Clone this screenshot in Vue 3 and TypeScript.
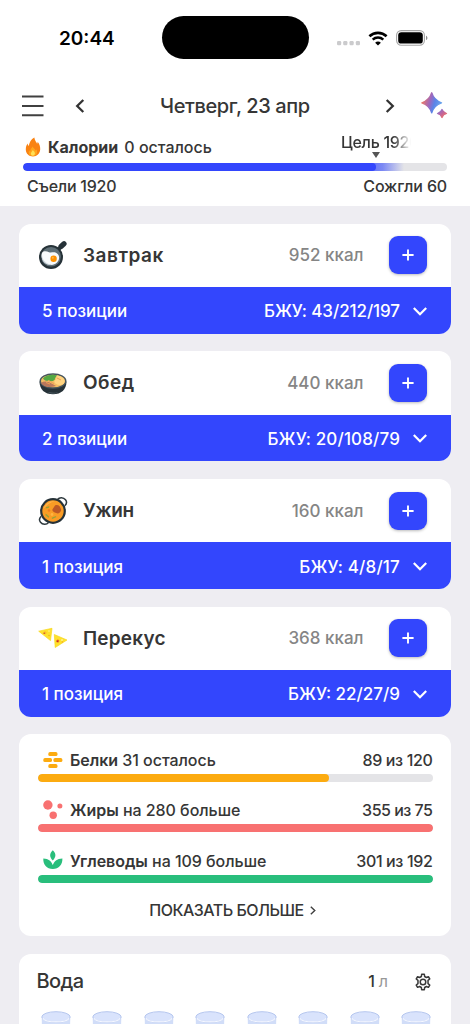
<script setup lang="ts">
interface Meal {
  id: string
  name: string
  kcal: number
  items: string
  macros: string
}
interface Nutrient {
  id: string
  name: string
  status: string
  total: string
  percent: number
}

const meals: Meal[] = [
  { id: 'breakfast', name: 'Завтрак', kcal: 952, items: '5 позиции', macros: '43/212/197' },
  { id: 'lunch', name: 'Обед', kcal: 440, items: '2 позиции', macros: '20/108/79' },
  { id: 'dinner', name: 'Ужин', kcal: 160, items: '1 позиция', macros: '4/8/17' },
  { id: 'snack', name: 'Перекус', kcal: 368, items: '1 позиция', macros: '22/27/9' },
]
const nutrients: Nutrient[] = [
  { id: 'protein', name: 'Белки', status: '31 осталось', total: '89 из 120', percent: 73.7 },
  { id: 'fat', name: 'Жиры', status: 'на 280 больше', total: '355 из 75', percent: 100 },
  { id: 'carbs', name: 'Углеводы', status: 'на 109 больше', total: '301 из 192', percent: 100 },
]
const cups = 8
</script>

<template>
  <div class="screen">
    <header class="top">
      <div class="status">
        <span class="time">20:44</span>
        <span class="island"></span>
        <div class="signals">
          <svg class="cell" width="24" height="6" viewBox="0 0 24 6" fill="#cbcbcd">
            <rect x="0" y="1" width="4.2" height="4.2" rx="1.2" /><rect x="6.2" y="1" width="4.2" height="4.2" rx="1.2" />
            <rect x="12.5" y="1" width="4.2" height="4.2" rx="1.2" /><rect x="18.8" y="1" width="4.2" height="4.2" rx="1.2" />
          </svg>
          <svg class="wifi" width="20" height="15" viewBox="0 0 20 15" fill="none" stroke="#000">
            <path d="M1.4 5.3C6.2.7 13.8.7 18.6 5.3" stroke-width="2.6" />
            <path d="M4.7 8.7c3-2.8 7.6-2.8 10.6 0" stroke-width="2.5" />
            <path d="M10 14.6l-2.9-2.9c1.6-1.5 4.2-1.5 5.8 0z" fill="#000" stroke="none" />
          </svg>
          <svg class="battery" width="32" height="16" viewBox="0 0 32 16">
            <rect x=".6" y=".6" width="27.8" height="14.6" rx="4.6" fill="none" stroke="#a5a5a5" stroke-width="1.1" />
            <rect x="2.2" y="2.2" width="24.6" height="11.4" rx="3.2" fill="#000" />
            <path d="M30 5.7c1.9.7 1.9 3.7 0 4.4z" fill="#8f8f8f" />
          </svg>
        </div>
      </div>

      <nav class="nav">
        <svg class="menu" width="22" height="22" viewBox="0 0 22 22" stroke="#404040" stroke-width="2.1">
          <path d="M0 1.5h21.5M0 11h21.5M0 20.3h21.5" />
        </svg>
        <svg class="prev" width="10" height="14" viewBox="0 0 10 14" fill="none" stroke="#333" stroke-width="2.3">
          <path d="M8.3 1 2.2 7l6.1 6" />
        </svg>
        <span class="date">Четверг, 23 апр</span>
        <svg class="next" width="10" height="14" viewBox="0 0 10 14" fill="none" stroke="#333" stroke-width="2.3">
          <path d="M1.7 1 7.8 7l-6.1 6" />
        </svg>
        <svg class="spark" width="27" height="27" viewBox="0 0 27 27">
          <defs>
            <linearGradient id="spark-a" x1="0" y1="0.3" x2="1" y2="0.6">
              <stop offset="0" stop-color="#f5785c" /><stop offset=".42" stop-color="#9a68c0" />
              <stop offset=".65" stop-color="#5a84e8" /><stop offset="1" stop-color="#6ca6ec" />
            </linearGradient>
            <linearGradient id="spark-b" x1="0" y1="0" x2="1" y2="1">
              <stop offset="0" stop-color="#7377e5" /><stop offset=".5" stop-color="#c2659a" /><stop offset="1" stop-color="#ff7858" />
            </linearGradient>
          </defs>
          <path d="M10.7.8Q12.9 8.3 20.5 10.800Q12.900 13.300 10.700 20.800Q8.500 13.300.9 10.800Q8.500 8.300 10.700.8z" fill="url(#spark-a)" stroke="url(#spark-a)" stroke-width="1.400" stroke-linejoin="round" />
          <path d="M21 17.500Q22 20.500 25.500 21.500Q22 22.500 21 25.500Q20 22.500 16.500 21.500Q20 20.500 21 17.500z" fill="url(#spark-b)" stroke="url(#spark-b)" stroke-width="1.300" stroke-linejoin="round" />
        </svg>
      </nav>

      <section class="calories">
        <div class="cal-head">
          <svg class="flame" width="16" height="20" viewBox="0 0 16 20">
            <path d="M9.300.5c.4 3.200 2.200 4.600 2.800 6.300.5-.6.6-1.200.5-2C14.600 7 15.400 9.700 15.200 12.500 14.900 16.700 12 19.400 8 19.400S1 16.700.8 12.700C.7 10 1.600 8 2.600 6.600c.2 1.200.5 2 1.100 2.500C4.400 5.400 6 2.400 9.300.5z" fill="#f98212" />
            <path d="M7.800 9.500c.4 2 2.300 2.300 2.900 4 .5-.3.7-.8.8-1.300 1.500 3.400.1 6.700-3.500 6.700-3.700 0-5.300-2.800-3.700-5.700.2.700.5 1.100 1 1.400C5.300 12.500 6.200 11 7.800 9.500z" fill="#ffa51c" />
            <path d="M7.800 13c1.200 1.400 2.300 2.200 2.100 3.800-.1 1.100-.9 1.900-2 1.900-1.200 0-2-.9-2-2 0-1.400 1.200-2.200 1.900-3.700z" fill="#ffe056" />
          </svg>
          <b>Калории</b>
          <span class="left">0 осталось</span>
          <span class="goal">Цель 1920</span>
          <i class="pointer"></i>
        </div>
        <div class="cal-track"><i class="cal-burned"></i><i class="cal-eaten"></i></div>
        <div class="cal-foot"><span class="eaten">Съели 1920</span><span class="burned">Сожгли 60</span></div>
      </section>
    </header>

    <main class="content">
      <article v-for="meal in meals" :key="meal.id" class="card">
        <div class="meal-head">
          <svg v-if="meal.id === 'breakfast'" class="meal-icon" width="30" height="30" viewBox="0 0 30 30">
            <path d="M20.500 9.500 24 5.700" stroke="#263238" stroke-width="3.500" />
            <path d="M23 6.500 26 3.800" stroke="#263238" stroke-width="5.200" stroke-linecap="round" />
            <circle cx="13" cy="17" r="12" fill="#263238" /><circle cx="13" cy="16.800" r="9.800" fill="#607078" />
            <path d="M4 13c2-2.500 4.500-1.600 7-.8 2.300.8 4.500-.7 7 .6 3.600 1.900 3.700 5.300 2.300 8-1.700 3.300-4.600 4.500-8 4-5.500-.5-10.200-6.800-8.300-11.800z" fill="#f8fbfd" />
            <path d="M4 14c0 6 3.600 9.300 9 10.500-5.500 1.400-10.500-4-9-10.500z" fill="#d3dbe1" />
            <circle cx="15.600" cy="18.700" r="3.200" fill="#ff9100" /><circle cx="14.800" cy="17.700" r="1" fill="#ffb64a" />
          </svg>
          <svg v-else-if="meal.id === 'lunch'" class="meal-icon" width="30" height="30" viewBox="0 0 30 30">
            <path d="M1.500 13.500c0 8 5.200 12.800 13.500 12.800S28.500 21.500 28.500 13.500z" fill="#263238" />
            <path d="M10 24c3 1 7.500 1.200 10 0-1.500 1.200-3 1.600-5 1.600s-3.500-.4-5-1.600z" fill="#53626a" />
            <ellipse cx="15" cy="13" rx="13.500" ry="7.800" fill="#47565e" />
            <ellipse cx="15" cy="13" rx="12" ry="6.300" fill="#f3bd63" />
            <path d="M3 14.800c4-2.400 8-1.200 12 1.500l3 1.800c-6 2.200-13.500.7-15-3.300z" fill="#b9785c" />
            <path d="M5 10.500C8 6.800 14 6 19 7.300l-2 3c.5 2.500-3.500 3.600-5.700 2.300-2.300.5-5 .3-6.300-2.100z" fill="#54a843" />
            <path d="M19 7.500c5 .4 9 4 7.200 7.500-1.500 2.200-5.800 2.800-8 1-2.500-1.300-2.200-4-.2-4.800z" fill="#ffd481" />
            <path d="M8 14.500 12 16M10 12.500l6 3M19 10l4 2" stroke="#ee9d53" stroke-width="1" />
          </svg>
          <svg v-else-if="meal.id === 'dinner'" class="meal-icon" width="30" height="30" viewBox="0 0 30 30">
            <path d="M19.500 3.500c2-2.700 6-2.300 8 .2 1.300 1.700 1.100 4.300-.7 6M10.500 26.500c-2 2.700-6 2.300-8-.2-1.300-1.700-1.100-4.300.7-6" fill="none" stroke="#303b40" stroke-width="1.500" />
            <circle cx="15" cy="15" r="12.900" fill="#263238" /><circle cx="15" cy="15" r="10.700" fill="#f99c25" />
            <path d="M5.500 13C7 7.500 12 4.500 17 5.300c-5 1-8.500 3.700-11.500 7.700z" fill="#ffb54b" />
            <path d="M17 9.500c3-1.300 5.500.8 6.200 4.500-.8 3-3 4-5 3-2.500-.4-4.700-2-3.500-4z" fill="#bd5925" />
            <path d="M7.500 18.500c1.500.2 2 2 3.500 2.500M14 22.500c1.500-1.300 2.500-.9 4-2M8 11.500c1.300.5 2-.9 3.200-.5" fill="none" stroke="#96a338" stroke-width="1.400" />
            <circle cx="11" cy="14.500" r="1.300" fill="#ee7b1e" /><circle cx="14" cy="18.500" r="1.400" fill="#ffb541" />
          </svg>
          <svg v-else class="meal-icon" width="30" height="30" viewBox="0 0 30 30">
            <path d="M.7 8.200 14 5.300 12.500 17.600z" fill="#ffe12c" stroke="#f6d820" stroke-width=".7" stroke-linejoin="round" />
            <path d="M16.300 11.500 29 17 17.200 24.500z" fill="#ffe12c" stroke="#f6d820" stroke-width=".7" stroke-linejoin="round" />
            <circle cx="7" cy="9.800" r="1.500" fill="#f8bd28" /><circle cx="6.200" cy="10.200" r=".8" fill="#cf482c" />
            <circle cx="11" cy="8" r=".8" fill="#fff3a0" /><circle cx="19.800" cy="18" r="1.500" fill="#ee6528" />
            <circle cx="19.300" cy="18.200" r=".7" fill="#a82c28" /><circle cx="24" cy="17" r="1" fill="#fff08c" />
            <circle cx="24.300" cy="19" r=".7" fill="#f3a51e" /><circle cx="11" cy="12.500" r=".7" fill="#eab31d" />
          </svg>
          <h2 :class="['meal-name', meal.id]">{{ meal.name }}</h2>
          <span class="kcal">{{ meal.kcal }} ккал</span>
          <button class="add" type="button">
            <svg width="12" height="12" viewBox="0 0 12 12" stroke="#fff" stroke-width="1.900"><path d="M6 .4v11.200M.4 6h11.200" /></svg>
          </button>
        </div>
        <div class="meal-foot">
          <span class="items">{{ meal.items }}</span>
          <span :class="['macros', meal.id]">БЖУ: {{ meal.macros }}</span>
          <svg class="down" width="14" height="9" viewBox="0 0 14 9" fill="none" stroke="#fff" stroke-width="2.200"><path d="m.8 1 6.200 6.200L13.200 1" /></svg>
        </div>
      </article>

      <section class="card nutrients">
        <div v-for="n in nutrients" :key="n.id" :class="['nutrient', n.id]">
          <div class="nutrient-row">
            <svg v-if="n.id === 'protein'" width="20" height="20" viewBox="0 0 20 20" fill="#fcab10">
              <rect x="5.300" y="2" width="9.200" height="4.100" rx="1.700" /><rect x=".3" y="8" width="8.700" height="4.100" rx="1.700" />
              <rect x="10.400" y="8" width="9" height="4.100" rx="1.700" /><rect x="5.300" y="14" width="9.200" height="4.100" rx="1.700" />
            </svg>
            <svg v-else-if="n.id === 'fat'" width="20" height="20" viewBox="0 0 20 20" fill="#f87171">
              <circle cx="4.900" cy="5" r="4.700" /><circle cx="16.900" cy="5.900" r="2.500" /><circle cx="10.200" cy="15.200" r="3.700" />
            </svg>
            <svg v-else width="20" height="20" viewBox="0 0 20 20" fill="#29be7c">
              <path d="M9.800.2c3.500 3.200 3.500 6.800 0 10.200-3.500-3.400-3.500-7 0-10.200z" />
              <path d="M.3 8.500c5.200.1 8.500 3 9.500 6.800 1-3.800 4.300-6.700 9.600-6.800.2 6-3.500 10.500-9.600 10.500S0 14.500.3 8.500z" />
            </svg>
            <p class="nutrient-label"><b>{{ n.name }}</b> {{ n.status }}</p>
            <span class="nutrient-total">{{ n.total }}</span>
          </div>
          <div class="track"><i :style="{ width: n.percent + '%' }"></i></div>
        </div>
        <div class="more"><span>ПОКАЗАТЬ БОЛЬШЕ</span>
          <svg width="6" height="9" viewBox="0 0 6 9" fill="none" stroke="#404040" stroke-width="1.400"><path d="m.8.7 4 3.800-4 3.800" /></svg>
        </div>
      </section>

      <section class="card water">
        <div class="water-head">
          <h2>Вода</h2>
          <span class="volume">1<em>л</em></span>
          <svg class="gear" width="18" height="18" viewBox="0 0 24 24" fill="none" stroke="#383838" stroke-width="2" stroke-linejoin="round">
            <path d="M9.800 4.700 10.200 1.800h3.600l.4 2.900 2.300 1.300 2.700-1.100L21 8l-2.300 1.900v4.200L21 16l-1.800 3.100-2.700-1.100-2.300 1.300-.4 2.900h-3.600l-.4-2.900L7.500 18l-2.700 1.100L3 16l2.300-1.900V9.900L3 8l1.800-3.100L7.500 6z" />
            <circle cx="12" cy="12" r="3.700" />
          </svg>
        </div>
        <div class="cups">
          <svg v-for="cup in cups" :key="cup" width="30" height="42" viewBox="0 0 30 42">
            <path d="M.7 6 1.500 40h27L29.300 6z" fill="#d1ddf8" />
            <ellipse cx="15" cy="6" rx="14.200" ry="5.300" fill="#d9e3fc" stroke="#b5c6ee" />
            <path d="M1.800 7.200c2.500 4.900 23.900 4.900 26.400 0" fill="none" stroke="#f6f8ff" stroke-width="1.100" />
          </svg>
        </div>
      </section>
    </main>
  </div>
</template>

<style>
body { background: #eeedf2; overflow: hidden; }
</style>

<style scoped>
* { box-sizing: border-box; }
.screen { width: 470px; height: 1024px; overflow: hidden; background: #eeedf2; color: #363636; font-family: Inter, "Noto Sans", sans-serif; font-size: 16px; font-weight: 500; white-space: nowrap; }
svg { display: block; flex: none; }
h2, p { margin: 0; }
.top { height: 206px; background: #fff; }
.status { display: flex; height: 76px; align-items: center; padding-left: 59px; }
.time { width: 102.500px; color: #000; font-size: 19px; font-weight: 600; }
.island { width: 147px; height: 43px; margin-top: -1px; border-radius: 22px; background: #000; }
.signals { display: flex; align-items: center; margin-left: 28px; }
.cell { margin-top: 10px; }
.wifi { margin-left: 7px; }
.battery { margin-left: 8px; }
.nav { display: flex; height: 58px; align-items: center; padding: 1px 0 0 22px; }
.prev { margin-left: 31px; }
.date { width: 150px; margin-left: 75px; font-size: 20px; letter-spacing: -.4px; }
.next { margin-left: 75px; }
.spark { margin: -1px 0 0 26px; }
.calories { padding: 0 23px; }
.cal-head { position: relative; display: flex; height: 29px; align-items: center; padding-bottom: 3px; }
.flame { margin-left: 2px; }
.cal-head b { margin-left: 7px; font-weight: 700; }
.left { margin-left: 6px; }
.goal { position: absolute; left: 318px; top: -2px; line-height: 20px; letter-spacing: -.3px; -webkit-mask-image: linear-gradient(90deg, #000 52px, transparent 70px); mask-image: linear-gradient(90deg, #000 52px, transparent 70px); }
.pointer { position: absolute; left: 349px; top: 18px; border: 4px solid transparent; border-top: 6px solid #555; border-bottom: 0; }
.cal-track { position: relative; height: 8px; overflow: hidden; border-radius: 4px; background: #e4e4e7; }
.cal-eaten { position: absolute; inset: 0 auto 0 0; width: 353px; border-radius: 4px; background: #3346fd; }
.cal-burned { position: absolute; inset: 0 auto 0 348px; width: 33px; background: linear-gradient(90deg, #6675f8, #7b88f4 35%, #e4e4e7); }
.cal-foot { display: flex; height: 31px; align-items: center; justify-content: space-between; padding: 0 0 1px 4px; }
.eaten { letter-spacing: -.25px; }
.burned { letter-spacing: -.15px; }
.content { display: flex; flex-direction: column; gap: 17.700px; padding: 17.500px 19px 0; }
.card { flex: none; overflow: hidden; border-radius: 12px; background: #fff; }
.meal-head { display: flex; height: 63.500px; align-items: center; padding: 0 24.500px 0 18.500px; }
.meal-name { margin-left: 15.500px; font-size: 19px; font-weight: 600; }
.meal-name.breakfast { letter-spacing: .5px; }
.meal-name.lunch { letter-spacing: .5px; }
.meal-name.dinner { letter-spacing: -.3px; }
.meal-name.snack { letter-spacing: .2px; }
.kcal { margin-left: auto; color: #858585; font-size: 17px; }
.add { display: grid; width: 38px; height: 38px; margin-left: 25px; padding: 0; place-items: center; border: 0; border-radius: 9px; background: #3346fd; box-shadow: 0 1px 3px #0004; }
.meal-foot { display: flex; height: 46.500px; align-items: center; padding: 2px 24px 0 23px; background: #3346fd; color: #fff; font-size: 17px; }
.macros { margin-left: auto; }
.macros.breakfast { letter-spacing: -.08px; }
.macros.lunch { letter-spacing: .14px; }
.macros.dinner { letter-spacing: .18px; }
.down { margin-left: 13px; }
.nutrients { height: 202px; padding: 15px 18.500px 0; }
.nutrient { height: 50.400px; }
.nutrient-row { display: flex; height: 24.500px; align-items: center; padding: 0 0 3px 5px; }
.nutrient-row svg { margin-top: -1px; }
.nutrient-label { margin-left: 7.500px; letter-spacing: -.04px; }
.nutrient-label b { font-weight: 600; }
.nutrient-total { margin-left: auto; letter-spacing: -.35px; }
.fat .nutrient-total { letter-spacing: -.5px; }
.track { height: 8px; overflow: hidden; border-radius: 4px; background: #e4e4e7; }
.track i { display: block; height: 8px; border-radius: 4px; }
.protein i { background: #fcab10; }
.fat i { background: #f87171; }
.carbs i { background: #29be7c; }
.more { display: flex; height: 20px; align-items: center; justify-content: center; gap: 6px; padding-right: 5px; letter-spacing: -.5px; }
.water { height: 110px; }
.water-head { display: flex; height: 56px; align-items: center; padding: 0 19px 0 17.500px; }
.water h2 { margin-top: -2px; font-size: 20px; font-weight: 500; letter-spacing: -.6px; }
.volume { margin: -1px 0 0 auto; font-size: 16px; }
.volume em { margin-left: 4px; color: #989898; font-style: normal; font-weight: 400; }
.gear { margin-left: 26px; }
.cups { display: flex; justify-content: space-between; padding: 1px 20px 0 22px; }
</style>
